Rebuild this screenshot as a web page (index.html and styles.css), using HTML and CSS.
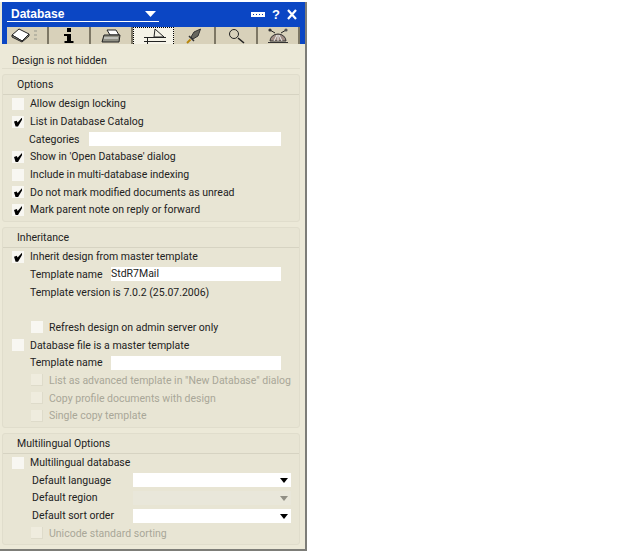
FILE: index.html
```html
<!DOCTYPE html>
<html lang="en">
<head>
<meta charset="utf-8">
<title>Database</title>
<link rel="stylesheet" href="styles.css">
</head>
<body>
<div class="window">
  <header class="titlebar">
    <div class="title-row">
      <div class="title-select">
        <span class="title-text">Database</span>
        <svg class="title-arrow" width="11" height="6" viewBox="0 0 11 6"><path d="M0 0h11L5.5 6z" fill="#fff"/></svg>
      </div>
      <div class="title-tools">
        <svg width="14" height="5" viewBox="0 0 14 5"><rect width="14" height="5" fill="#fff"/><path d="M2 2h1v1H2zM5 2h1v1H5zM8 2h1v1H8zM11 2h1v1h-1z" fill="#0b3fb5"/></svg>
        <span class="tool-glyph">?</span>
        <svg width="10" height="11" viewBox="0 0 10 11"><path d="M1 1l8 9M9 1l-8 9" stroke="#fff" stroke-width="2.2" fill="none"/></svg>
      </div>
    </div>
    <nav class="tabs">
      <div class="tab"><svg width="32" height="15" viewBox="0 0 32 15"><path d="M1 7l7-6 10 5-7 7z" fill="#fff" stroke="#222"/><path d="M1 7v2l10 5 7-6V6l-7 7z" fill="#9a9a8c" stroke="#222"/><path d="M23 2h3v2h-3zM23 6h3v2h-3zM23 10h3v2h-3z" fill="#b8b5a4"/></svg></div>
      <div class="tab"><svg width="12" height="15" viewBox="0 0 12 15"><rect x="4" y="0" width="4" height="4" fill="#000"/><path d="M1 6h7v7h2.500v2h-9v-2H4V8H1z" fill="#000"/></svg></div>
      <div class="tab"><svg width="20" height="14" viewBox="0 0 20 14"><path d="M6 1h9l3 5H9z" fill="#fff" stroke="#222"/><path d="M3 6h16l-1 7H1z" fill="#8f8f84" stroke="#222"/><path d="M3 9h14" stroke="#eee"/></svg></div>
      <div class="tab tab-active"><svg width="30" height="16" viewBox="0 0 30 16"><path d="M15 9l1-8 9 8z" fill="#f5f3e8" stroke="#222"/><path d="M5 9.500h22M5 13.500h22M8.500 9v7" stroke="#222" fill="none"/></svg></div>
      <div class="tab"><svg width="16" height="16" viewBox="0 0 16 16"><path d="M14.500 1L8 4 5 9l2 2 5-3z" fill="#66665e" stroke="#333"/><path d="M3 8l5 5" stroke="#333" stroke-width="1.5"/><path d="M4.500 11.500L1 15" stroke="#b8860b" stroke-width="2"/></svg></div>
      <div class="tab"><svg width="17" height="16" viewBox="0 0 17 16"><circle cx="6" cy="6" r="4.500" fill="none" stroke="#222"/><path d="M10 10l6 5" stroke="#222" stroke-width="1.600"/></svg></div>
      <div class="tab"><svg width="22" height="15" viewBox="0 0 22 15"><path d="M3 13a8 7 0 0 1 16 0z" fill="#a08c84" stroke="#333"/><path d="M11 7v6M7 13l3-6M15 13l-3-6" stroke="#eee"/><path d="M1 14.500h20" stroke="#333"/><path d="M3 2l5 3M19 2l-5 3" stroke="#222"/><circle cx="3" cy="2" r="1.600" fill="#333"/><circle cx="19" cy="2" r="1.600" fill="#555"/></svg></div>
    </nav>
  </header>
  <main class="body">
    <div class="panel panel-top"><span class="top-text">Design is not hidden</span></div>

    <section class="panel">
      <h2 class="panel-head">Options</h2>
      <div class="row"><i class="box"></i><span>Allow design locking</span></div>
      <div class="row"><i class="box checked"></i><span>List in Database Catalog</span></div>
      <div class="row field-cat"><label class="lbl-cat">Categories</label><i class="input input-a"></i></div>
      <div class="row"><i class="box checked"></i><span>Show in 'Open Database' dialog</span></div>
      <div class="row"><i class="box"></i><span>Include in multi-database indexing</span></div>
      <div class="row"><i class="box checked"></i><span>Do not mark modified documents as unread</span></div>
      <div class="row"><i class="box checked"></i><span>Mark parent note on reply or forward</span></div>
    </section>

    <section class="panel">
      <h2 class="panel-head">Inheritance</h2>
      <div class="row"><i class="box checked"></i><span>Inherit design from master template</span></div>
      <div class="row indent-text"><label class="lbl-tpl">Template name</label><span class="input input-b">StdR7Mail</span></div>
      <div class="row indent-text"><span>Template version is 7.0.2 (25.07.2006)</span></div>
      <div class="row"></div>
      <div class="row sub"><i class="box"></i><span>Refresh design on admin server only</span></div>
      <div class="row"><i class="box"></i><span>Database file is a master template</span></div>
      <div class="row indent-text"><label class="lbl-tpl">Template name</label><i class="input input-b"></i></div>
      <div class="row sub off"><i class="box"></i><span>List as advanced template in "New Database" dialog</span></div>
      <div class="row sub off"><i class="box"></i><span>Copy profile documents with design</span></div>
      <div class="row sub off"><i class="box"></i><span>Single copy template</span></div>
    </section>

    <section class="panel panel-last">
      <h2 class="panel-head">Multilingual Options</h2>
      <div class="row"><i class="box"></i><span>Multilingual database</span></div>
      <div class="row sel-row"><label class="lbl-sel">Default language</label><span class="select"><i class="arrow"></i></span></div>
      <div class="row sel-row"><label class="lbl-sel">Default region</label><span class="select select-off"><i class="arrow"></i></span></div>
      <div class="row sel-row"><label class="lbl-sel">Default sort order</label><span class="select"><i class="arrow"></i></span></div>
      <div class="row sub off"><i class="box"></i><span>Unicode standard sorting</span></div>
    </section>
  </main>
</div>
</body>
</html>
```
FILE: styles.css
```css
html, body {
  margin: 0;
  padding: 0;
  background: #fff;
}
body {
  font-family: Roboto, "Liberation Sans", Arial, sans-serif;
  font-size: 10.5px;
  color: #222;
}
.window {
  width: 303px;
  height: 547px;
  margin-top: 2px;
  padding-left: 2px;
  border-right: 2px solid #7d7d78;
  border-bottom: 2px solid #7d7d78;
  background: #ece9d8;
  display: flex;
  flex-direction: column;
}
.titlebar {
  background: #0b46c4;
  height: 42px;
  display: flex;
  flex-direction: column;
  flex: none;
}
.title-row {
  height: 25px;
  display: flex;
  justify-content: space-between;
  box-sizing: border-box;
  padding: 0 8px 0 5px;
}
.title-select {
  width: 152px;
  height: 20px;
  border-bottom: 1px solid #fff;
  display: flex;
  align-items: center;
  justify-content: space-between;
  padding: 5px 3px 0 4px;
  box-sizing: border-box;
}
.title-text {
  color: #fff;
  font-family: "Liberation Sans", Arial, sans-serif;
  font-weight: bold;
  font-size: 12px;
}
.title-tools {
  display: flex;
  align-items: center;
  gap: 7px;
  height: 24px;
}
.tool-glyph {
  color: #fff;
  font-family: "Liberation Sans", Arial, sans-serif;
  font-weight: bold;
  font-size: 13px;
}
.tabs {
  flex: 1;
  display: flex;
  padding: 0 5px;
}
.tab {
  width: 42px;
  background: #d8d1ba;
  border-right: 2px solid #7d7765;
  box-sizing: border-box;
  display: flex;
  align-items: center;
  justify-content: center;
  overflow: hidden;
}
.tab-active {
  background: #f5f3e8;
  border: 1px dotted #000;
  border-bottom: 0;
}
.body {
  flex: 1;
  padding: 6px 5px 0 0;
  display: flex;
  flex-direction: column;
  gap: 5px;
}
.panel {
  background: #e8e5d4;
  border: 1px solid #e0ddcc;
  border-radius: 3px;
  padding: 0 0 2px;
  flex: none;
}
.panel-top {
  height: 19px;
  box-sizing: border-box;
  padding: 2px 0 0 10px;
  display: flex;
  align-items: center;
  background: #ece9d8;
  border-width: 0 0 1px;
  border-radius: 0;
}
.panel-head {
  margin: 0;
  font: inherit;
  height: 19px;
  line-height: 20px;
  padding-left: 14px;
  border-bottom: 1px solid #d6d3c2;
}
.row {
  height: 17.7px;
  display: flex;
  align-items: center;
  padding-left: 9px;
  white-space: nowrap;
}
.box {
  width: 12px;
  height: 12px;
  flex: none;
  margin-right: 6px;
  background: #f8f7f2;
  position: relative;
}
.checked::after {
  content: "";
  position: absolute;
  left: 2px;
  top: 2px;
  width: 8px;
  height: 9px;
  background: #000;
  clip-path: polygon(0 45%, 35% 35%, 45% 55%, 100% 0, 100% 25%, 50% 100%, 20% 100%);
}
.sub {
  padding-left: 28px;
}
.off {
  color: #a9a798;
}
.off .box {
  background: #efecde;
  box-shadow: inset -1px -1px 0 #dedbca;
}
.indent-text {
  padding-left: 27px;
}
.field-cat {
  padding-left: 26px;
}
.lbl-cat {
  width: 60px;
  flex: none;
}
.lbl-tpl {
  width: 81px;
  flex: none;
}
.input {
  display: block;
  height: 14px;
  line-height: 14px;
  background: #fff;
  flex: none;
  font-style: normal;
}
.input-a {
  width: 192px;
}
.input-b {
  width: 170px;
  box-sizing: border-box;
}
.sel-row {
  padding-left: 29px;
}
.lbl-sel {
  width: 101px;
  flex: none;
}
.select {
  width: 158px;
  height: 14px;
  background: #fff;
  position: relative;
  flex: none;
}
.select-off {
  background: #e9e7da;
}
.arrow {
  position: absolute;
  right: 3px;
  top: 5px;
  border: 4px solid transparent;
  border-top: 5px solid #000;
  border-bottom: 0;
}
.select-off .arrow {
  border-top-color: #918f84;
}
```
